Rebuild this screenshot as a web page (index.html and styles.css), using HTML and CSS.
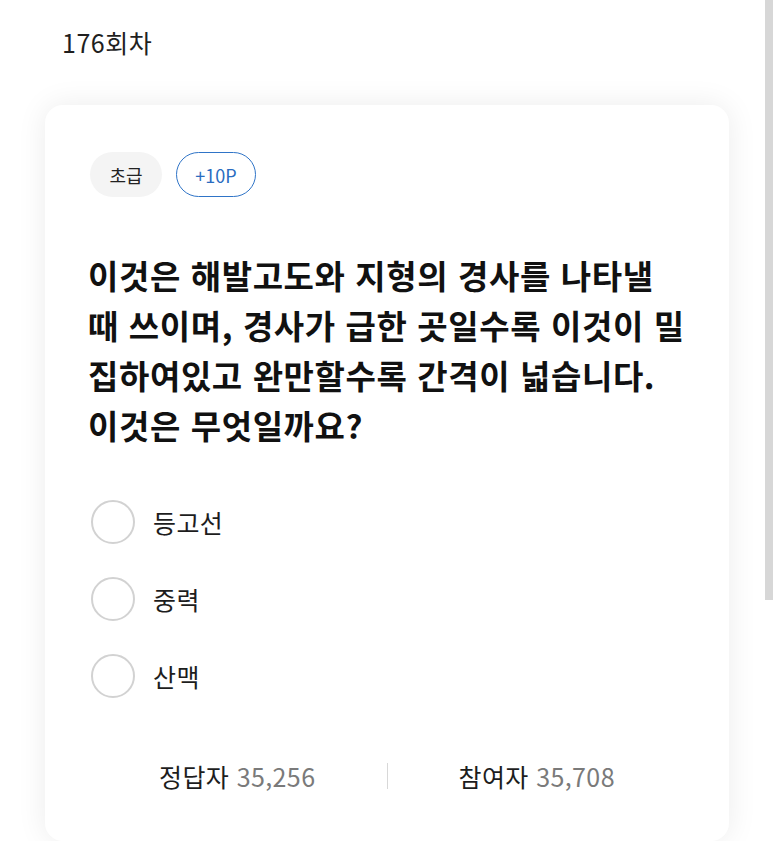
FILE: index.html
```html
<!DOCTYPE html>
<html lang="ko">
<head>
<meta charset="utf-8">
<title>176회차</title>
<link rel="stylesheet" href="styles.css">
</head>
<body>
<div class="page">
  <header class="round">176회차</header>
  <section class="card">
    <div class="badges">
      <span class="badge level">초급</span>
      <span class="badge point">+10P</span>
    </div>
    <h1 class="question">이것은 해발고도와 지형의 경사를 나타낼 때 쓰이며, 경사가 급한 곳일수록 이것이 밀집하여있고 완만할수록 간격이 넓습니다. 이것은 무엇일까요?</h1>
    <ul class="options">
      <li class="option"><span class="radio"></span><span class="label">등고선</span></li>
      <li class="option"><span class="radio"></span><span class="label">중력</span></li>
      <li class="option"><span class="radio"></span><span class="label">산맥</span></li>
    </ul>
    <div class="stats">
      <div class="stat"><span class="stat-label">정답자</span> <span class="stat-num">35,256</span></div>
      <div class="divider"></div>
      <div class="stat"><span class="stat-label">참여자</span> <span class="stat-num">35,708</span></div>
    </div>
  </section>
</div>
<div class="scroll-thumb"></div>
</body>
</html>
```

FILE: styles.css
```css
* { box-sizing: border-box; }
html, body {
  margin: 0;
  padding: 0;
  background: #ffffff;
}
body {
  font-family: "Noto Sans CJK KR", "Noto Sans", sans-serif;
  color: #222;
}
.page {
  padding: 0 44px 0 45px;
  width: 773px;
}
.round {
  padding: 24px 0 0 17px;
  font-size: 25px;
  line-height: 36px;
  color: #1f1f1f;
  letter-spacing: 0.5px;
}
.card {
  margin-top: 45px;
  width: 684px;
  background: #fff;
  border-radius: 18px;
  box-shadow: 0 0 30px rgba(0, 0, 0, 0.08);
  padding: 47px 40px 40px 43px;
}
.badges {
  display: flex;
  gap: 14px;
  padding-left: 2px;
}
.badge {
  height: 45px;
  border-radius: 23px;
  display: inline-flex;
  align-items: center;
  justify-content: center;
  font-size: 18px;
}
.level {
  background: #f4f4f4;
  color: #222;
  width: 72px;
}
.point {
  border: 1.5px solid #2f74c7;
  color: #2a6cc0;
  width: 80px;
}
.question {
  margin: 53px 0 0 0;
  font-size: 33px;
  line-height: 50px;
  font-weight: 700;
  color: #111;
  letter-spacing: 0.6px;
}
.options {
  list-style: none;
  margin: 33px 0 0 0;
  padding: 0;
}
.option {
  display: flex;
  align-items: center;
  height: 77px;
  padding-left: 3px;
}
.radio {
  width: 44px;
  height: 44px;
  border-radius: 50%;
  border: 2px solid #d2d2d2;
  flex: none;
}
.label {
  margin-left: 18px;
  font-size: 25px;
  color: #1d1d1d;
  letter-spacing: 0.4px;
}
.stats {
  margin-top: 37px;
  height: 50px;
  display: flex;
  align-items: center;
  padding-right: 3px;
}
.stat {
  flex: 1;
  text-align: center;
  font-size: 25px;
  letter-spacing: 0.4px;
}
.stat-label { color: #1d1d1d; }
.stat-num { color: #7a7a7a; }
.divider {
  width: 1px;
  height: 26px;
  background: #d8d8d8;
}
.scroll-thumb {
  position: fixed;
  top: 0;
  right: 0;
  width: 8px;
  height: 600px;
  background: #d7d7d7;
}
```
